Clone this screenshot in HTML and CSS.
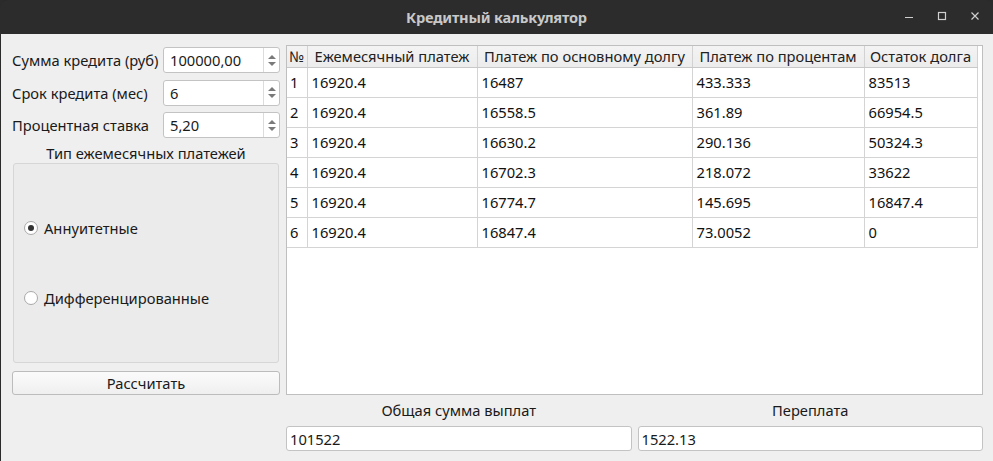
FILE: index.html
```html
<!DOCTYPE html>
<html lang="ru">
<head>
<meta charset="utf-8">
<title>Кредитный калькулятор</title>
<link rel="stylesheet" href="styles.css">
</head>
<body>
<div class="window">
  <div class="titlebar">
    <div class="title">Кредитный калькулятор</div>
    <div class="controls">
      <svg class="ctl" width="12" height="12" viewBox="0 0 12 12"><path d="M2 7.5h8" stroke="#cfcfcf" stroke-width="1.2"/></svg>
      <svg class="ctl" width="12" height="12" viewBox="0 0 12 12"><rect x="2.5" y="2.5" width="7" height="7" fill="none" stroke="#cfcfcf" stroke-width="1.2"/></svg>
      <svg class="ctl" width="12" height="12" viewBox="0 0 12 12"><path d="M2.5 2.5l7 7M9.5 2.5l-7 7" stroke="#cfcfcf" stroke-width="1.2"/></svg>
    </div>
  </div>
  <div class="content">
    <div class="left">
      <div class="form-row">
        <span class="label">Сумма кредита (руб)</span>
        <div class="spin"><span class="spin-val">100000,00</span><span class="arrows"><i class="up"></i><i class="down"></i></span></div>
      </div>
      <div class="form-row">
        <span class="label">Срок кредита (мес)</span>
        <div class="spin"><span class="spin-val">6</span><span class="arrows"><i class="up"></i><i class="down"></i></span></div>
      </div>
      <div class="form-row">
        <span class="label">Процентная ставка</span>
        <div class="spin"><span class="spin-val">5,20</span><span class="arrows"><i class="up"></i><i class="down"></i></span></div>
      </div>
      <div class="group-title">Тип ежемесячных платежей</div>
      <div class="group">
        <div class="radio checked"><span class="circle"></span>Аннуитетные</div>
        <div class="radio"><span class="circle"></span>Дифференцированные</div>
      </div>
      <div class="button">Рассчитать</div>
    </div>
    <div class="right">
      <div class="table-frame">
        <table class="grid">
          <colgroup>
            <col class="c0"><col class="c1"><col class="c2"><col class="c3"><col class="c4">
          </colgroup>
          <thead>
            <tr><th>№</th><th>Ежемесячный платеж</th><th>Платеж по основному долгу</th><th>Платеж по процентам</th><th>Остаток долга</th></tr>
          </thead>
          <tbody>
            <tr><td>1</td><td>16920.4</td><td>16487</td><td>433.333</td><td>83513</td></tr>
            <tr><td>2</td><td>16920.4</td><td>16558.5</td><td>361.89</td><td>66954.5</td></tr>
            <tr><td>3</td><td>16920.4</td><td>16630.2</td><td>290.136</td><td>50324.3</td></tr>
            <tr><td>4</td><td>16920.4</td><td>16702.3</td><td>218.072</td><td>33622</td></tr>
            <tr><td>5</td><td>16920.4</td><td>16774.7</td><td>145.695</td><td>16847.4</td></tr>
            <tr><td>6</td><td>16920.4</td><td>16847.4</td><td>73.0052</td><td>0</td></tr>
          </tbody>
        </table>
      </div>
      <div class="totals">
        <div class="total">
          <div class="total-label">Общая сумма выплат</div>
          <div class="field">101522</div>
        </div>
        <div class="total">
          <div class="total-label">Переплата</div>
          <div class="field">1522.13</div>
        </div>
      </div>
    </div>
  </div>
</div>
</body>
</html>
```
FILE: styles.css
```css
* { box-sizing: border-box; }
html, body { margin: 0; padding: 0; }
body {
  width: 993px;
  height: 461px;
  overflow: hidden;
  background: #2b2b2b;
  font-family: "Noto Sans", "DejaVu Sans", sans-serif;
  font-size: 14.7px;
  color: #1a1a1a;
}
.window {
  width: 993px;
  height: 461px;
  display: flex;
  flex-direction: column;
  background: #2b2b2b;
  border-radius: 8px 8px 0 0;
  overflow: hidden;
}
.titlebar {
  height: 34px;
  flex: none;
  display: flex;
  align-items: center;
  justify-content: center;
  position: relative;
  background: #2c2c2c;
}
.title {
  color: #c8c8c8;
  font-weight: bold;
  font-size: 14.6px;
  letter-spacing: -0.2px;
}
.controls {
  position: absolute;
  right: 12px;
  top: 10px;
  display: flex;
  gap: 21px;
}
.ctl { display: block; }
.content {
  flex: 1;
  display: flex;
  gap: 6px;
  background: #efefef;
  margin-left: 1px;
  padding: 11px 10px 10px 11px;
}
.left {
  width: 268px;
  flex: none;
  display: flex;
  flex-direction: column;
  padding-top: 2px;
}
.form-row {
  height: 26px;
  display: flex;
  align-items: center;
  margin-bottom: 6.5px;
}
.label {
  width: 151px;
  flex: none;
  white-space: nowrap;
}
.spin {
  flex: 1;
  height: 26px;
  background: #fff;
  border: 1px solid #c3c3c3;
  border-radius: 3px;
  display: flex;
  align-items: center;
}
.spin-val {
  flex: 1;
  padding-left: 6px;
}
.arrows {
  width: 16px;
  height: 100%;
  border-left: 1px solid #dcdcdc;
  display: flex;
  flex-direction: column;
  align-items: center;
  justify-content: center;
  gap: 3px;
}
.arrows i {
  width: 0;
  height: 0;
  border-left: 4px solid transparent;
  border-right: 4px solid transparent;
}
.arrows .up { border-bottom: 4px solid #7a7a7a; }
.arrows .down { border-top: 4px solid #7a7a7a; }
.group-title {
  text-align: center;
  height: 18px;
  line-height: 18px;
  margin-top: -1px;
  margin-bottom: 1px;
}
.group {
  height: 200px;
  margin: 0 1px;
  background: #ebebeb;
  border: 1px solid #d6d6d6;
  border-radius: 3px;
  display: flex;
  flex-direction: column;
  padding: 54px 0 0 10px;
  gap: 50px;
}
.radio {
  height: 20px;
  display: flex;
  align-items: center;
  gap: 6px;
}
.circle {
  width: 14px;
  height: 14px;
  border-radius: 50%;
  border: 1px solid #a9a9a9;
  background: #fff;
  display: flex;
  align-items: center;
  justify-content: center;
}
.checked .circle::after {
  content: "";
  width: 6px;
  height: 6px;
  border-radius: 50%;
  background: #333;
}
.button {
  margin-top: 8px;
  height: 24px;
  border: 1px solid #bcbcbc;
  border-radius: 3px;
  background: linear-gradient(#fbfbfb, #efefef);
  display: flex;
  align-items: center;
  justify-content: center;
}
.right {
  flex: 1;
  display: flex;
  flex-direction: column;
}
.table-frame {
  height: 350px;
  background: #fff;
  border: 1px solid #bfbfbf;
}
.grid {
  border-collapse: collapse;
  table-layout: fixed;
  width: 690px;
  color: #111;
}
.c0 { width: 20px; }
.c1 { width: 170px; }
.c2 { width: 215px; }
.c3 { width: 172px; }
.c4 { width: 113px; }
.grid th {
  height: 21px;
  padding: 0;
  text-align: center;
  font-weight: normal;
  background: linear-gradient(#f3f3f3, #ececec);
  border-right: 1px solid #d2d2d2;
  border-bottom: 1px solid #c8c8c8;
  white-space: nowrap;
  overflow: hidden;
  color: #222;
}
.grid td {
  height: 30px;
  padding: 0 0 0 4px;
  border-right: 1px solid #d4d4d4;
  border-bottom: 1px solid #d4d4d4;
}
.grid td:first-child { padding-left: 3px; }
.totals {
  display: flex;
  gap: 6px;
  margin-top: 6px;
}
.total {
  flex: 1;
  display: flex;
  flex-direction: column;
}
.total-label {
  text-align: center;
  height: 18px;
  line-height: 18px;
  margin-bottom: 7px;
}
.field {
  height: 25px;
  background: #fff;
  border: 1px solid #c3c3c3;
  border-radius: 3px;
  padding-left: 3px;
  display: flex;
  align-items: center;
}
```
